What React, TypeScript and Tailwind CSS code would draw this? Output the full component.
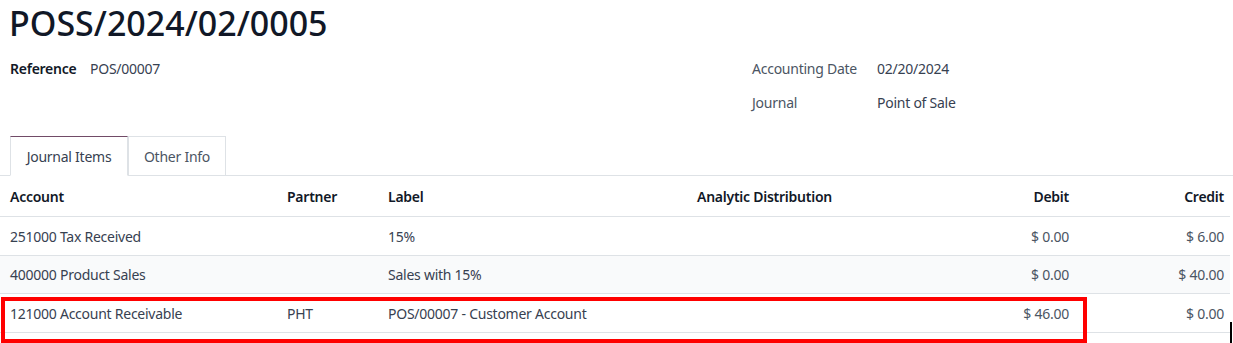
import React from 'react';

type Line = {
  account: string;
  partner: string;
  label: string;
  debit: string;
  credit: string;
};

const lines: Line[] = [
  { account: '251000 Tax Received', partner: '', label: '15%', debit: '$ 0.00', credit: '$ 6.00' },
  { account: '400000 Product Sales', partner: '', label: 'Sales with 15%', debit: '$ 0.00', credit: '$ 40.00' },
  { account: '121000 Account Receivable', partner: 'PHT', label: 'POS/00007 - Customer Account', debit: '$ 46.00', credit: '$ 0.00' },
];

const App: React.FC = () => {
  return (
    <div className="w-[1233px] h-[343px] overflow-hidden bg-white text-[14px] tracking-[-0.25px] text-[#374151] font-['Noto_Sans',sans-serif] relative">
      {/* titre */}
      <h1 className="pl-[9px] pt-[1px] h-[48px] text-[34px] leading-[44px] tracking-normal font-medium text-[#111827]">POSS/2024/02/0005</h1>

      {/* champs */}
      <div className="flex mt-[10px]">
        <div className="w-[752px] pl-[10px]">
          <div className="flex h-[20px] items-center">
            <span className="w-[80px] font-semibold text-[#111827]">Reference</span>
            <span>POS/00007</span>
          </div>
        </div>
        <div className="flex flex-col gap-[14px] text-[#4b5563]">
          <div className="flex h-[20px] items-center">
            <span className="w-[125px]">Accounting Date</span>
            <span className="text-[#374151]">02/20/2024</span>
          </div>
          <div className="flex h-[20px] items-center">
            <span className="w-[125px]">Journal</span>
            <span className="text-[#374151]">Point of Sale</span>
          </div>
        </div>
      </div>

      {/* onglets */}
      <div className="mt-[24px] flex pl-[10px] border-b border-[#dee2e6] h-[40px]">
        <div className="w-[118px] h-[40px] -mb-px bg-white border border-[#dee2e6] border-b-white border-t-[#714b67] flex items-center justify-center text-[#374151]">
          Journal Items
        </div>
        <div className="w-[98px] h-[39px] border border-[#dee2e6] border-b-0 flex items-center justify-center text-[#4b5563]">
          Other Info
        </div>
      </div>

      {/* tableau */}
      <div className="w-[1230px]">
        <div className="flex h-[41px] items-center border-b border-[#dee2e6] font-semibold text-[#111827]">
          <div className="w-[277px] pl-[10px]">Account</div>
          <div className="w-[101px] pl-[10px]">Partner</div>
          <div className="w-[309px] pl-[10px]">Label</div>
          <div className="w-[220px] pl-[10px]">Analytic Distribution</div>
          <div className="w-[162px] text-right">Debit</div>
          <div className="w-[155px] text-right">Credit</div>
        </div>
        {lines.map((l, i) => (
          <div
            key={i}
            className={`flex items-center border-b border-[#dee2e6] ${i === 1 ? 'h-[38px] bg-[#f9fafb]' : 'h-[39px]'}`}
          >
            <div className="w-[277px] pl-[10px]">{l.account}</div>
            <div className="w-[101px] pl-[10px]">{l.partner}</div>
            <div className="w-[309px] pl-[10px]">{l.label}</div>
            <div className="w-[220px] pl-[10px]"></div>
            <div className="w-[162px] text-right text-[#4b5563]">{l.debit}</div>
            <div className="w-[155px] text-right text-[#4b5563]">{l.credit}</div>
          </div>
        ))}
      </div>

      {/* surlignage rouge */}
      <div className="absolute left-[1px] top-[297px] w-[1086px] h-[46px] border-[4px] border-[#ff0000]"></div>
      {/* curseur */}
      <div className="absolute left-[1230px] top-[322px] w-[2px] h-[21px] bg-black"></div>
    </div>
  );
};

export default App;
